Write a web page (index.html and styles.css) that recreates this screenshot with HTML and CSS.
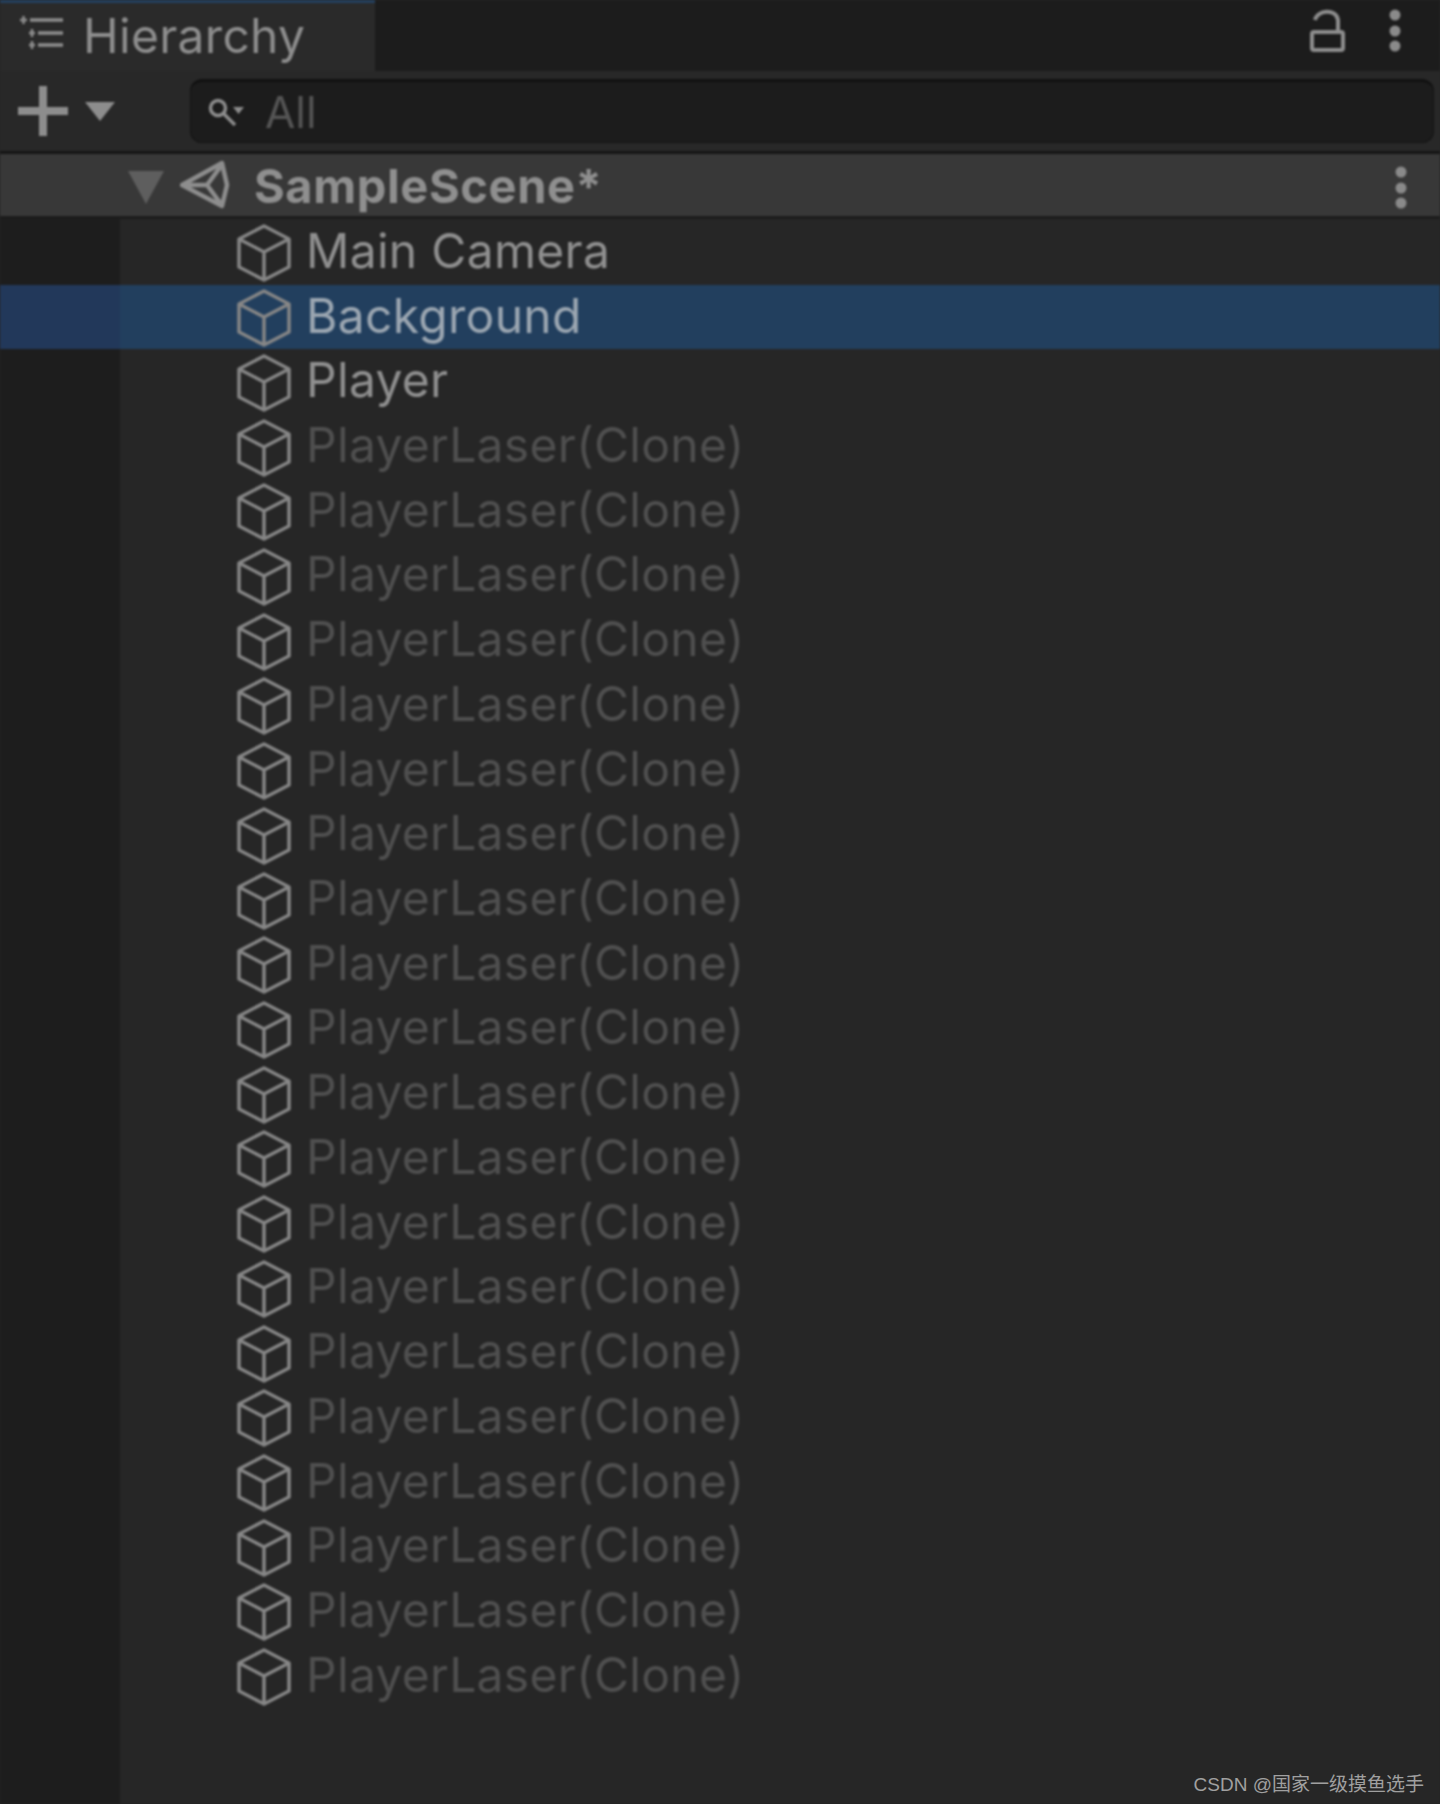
FILE: index.html
```html
<!DOCTYPE html>
<html lang="en">
<head>
    <meta charset="UTF-8">
    <title>Hierarchy</title>
    <link rel="stylesheet" href="styles.css">
</head>
<body>
    <svg class="defs" width="0" height="0">
        <symbol id="cube" viewBox="0 0 54 58">
            <path d="M27 2 L52 15 V43 L27 56 L2 43 V15 Z M2 15 L27 28 L52 15 M27 28 V56" fill="none" stroke="currentColor" stroke-width="3.500" stroke-linejoin="round"/>
        </symbol>
        <symbol id="dots" viewBox="0 0 12 44">
            <circle cx="6" cy="6" r="5.500" fill="currentColor"/>
            <circle cx="6" cy="22" r="5.500" fill="currentColor"/>
            <circle cx="6" cy="37" r="5.500" fill="currentColor"/>
        </symbol>
    </svg>

    <div class="panel">
        <!-- Tab strip -->
        <div class="tabbar">
            <div class="tab">
                <svg class="tab-icon" viewBox="0 0 46 36">
                    <path d="M10 6 H43 M18 19 H43 M18 31 H43" stroke="currentColor" stroke-width="3.500" fill="none"/>
                    <path d="M0 6 H7 M3.500 2 V10 M9 19 H15 M12 15 V23 M9 31 H15 M12 27 V35" stroke="currentColor" stroke-width="2.500" fill="none"/>
                </svg>
                <span>Hierarchy</span>
            </div>
            <div class="tab-actions">
                <svg class="lock" viewBox="0 0 36 44">
                    <path d="M6 11 C8 1 27 -1 29 11 V23" fill="none" stroke="currentColor" stroke-width="4"/>
                    <rect x="3" y="23" width="31" height="18" rx="2" fill="none" stroke="currentColor" stroke-width="4"/>
                </svg>
                <svg class="dots"><use href="#dots"/></svg>
            </div>
        </div>

        <!-- Toolbar -->
        <div class="toolbar">
            <div class="add">
                <svg class="plus" viewBox="0 0 50 50">
                    <path d="M25 0 V50 M0 25 H50" stroke="currentColor" stroke-width="8"/>
                </svg>
                <span class="caret"></span>
            </div>
            <div class="search">
                <svg class="search-icon" viewBox="0 0 38 32">
                    <circle cx="11" cy="12" r="7.500" fill="none" stroke="currentColor" stroke-width="3.500"/>
                    <path d="M17 18 L28 29" stroke="currentColor" stroke-width="3.500"/>
                    <path d="M26 11 H37 L31.500 18 Z" fill="currentColor"/>
                </svg>
                <span>All</span>
            </div>
        </div>

        <!-- Scene header -->
        <div class="scene">
            <span class="scene-arrow"></span>
            <svg class="unity" viewBox="0 0 50 50">
                <path d="M2 25 L42 3 L47 25 L42 46 Z M2 25 H27 L41 6 M27 25 L41 44" fill="none" stroke="currentColor" stroke-width="4.500" stroke-linejoin="round"/>
            </svg>
            <span class="scene-name">SampleScene*</span>
            <svg class="dots scene-dots"><use href="#dots"/></svg>
        </div>

        <!-- Object list -->
        <div class="rows">
            <div class="row"><svg class="cube"><use href="#cube"/></svg><span>Main Camera</span></div>
            <div class="row selected"><svg class="cube"><use href="#cube"/></svg><span>Background</span></div>
            <div class="row"><svg class="cube"><use href="#cube"/></svg><span>Player</span></div>
            <div class="row off"><svg class="cube"><use href="#cube"/></svg><span>PlayerLaser(Clone)</span></div>
            <div class="row off"><svg class="cube"><use href="#cube"/></svg><span>PlayerLaser(Clone)</span></div>
            <div class="row off"><svg class="cube"><use href="#cube"/></svg><span>PlayerLaser(Clone)</span></div>
            <div class="row off"><svg class="cube"><use href="#cube"/></svg><span>PlayerLaser(Clone)</span></div>
            <div class="row off"><svg class="cube"><use href="#cube"/></svg><span>PlayerLaser(Clone)</span></div>
            <div class="row off"><svg class="cube"><use href="#cube"/></svg><span>PlayerLaser(Clone)</span></div>
            <div class="row off"><svg class="cube"><use href="#cube"/></svg><span>PlayerLaser(Clone)</span></div>
            <div class="row off"><svg class="cube"><use href="#cube"/></svg><span>PlayerLaser(Clone)</span></div>
            <div class="row off"><svg class="cube"><use href="#cube"/></svg><span>PlayerLaser(Clone)</span></div>
            <div class="row off"><svg class="cube"><use href="#cube"/></svg><span>PlayerLaser(Clone)</span></div>
            <div class="row off"><svg class="cube"><use href="#cube"/></svg><span>PlayerLaser(Clone)</span></div>
            <div class="row off"><svg class="cube"><use href="#cube"/></svg><span>PlayerLaser(Clone)</span></div>
            <div class="row off"><svg class="cube"><use href="#cube"/></svg><span>PlayerLaser(Clone)</span></div>
            <div class="row off"><svg class="cube"><use href="#cube"/></svg><span>PlayerLaser(Clone)</span></div>
            <div class="row off"><svg class="cube"><use href="#cube"/></svg><span>PlayerLaser(Clone)</span></div>
            <div class="row off"><svg class="cube"><use href="#cube"/></svg><span>PlayerLaser(Clone)</span></div>
            <div class="row off"><svg class="cube"><use href="#cube"/></svg><span>PlayerLaser(Clone)</span></div>
            <div class="row off"><svg class="cube"><use href="#cube"/></svg><span>PlayerLaser(Clone)</span></div>
            <div class="row off"><svg class="cube"><use href="#cube"/></svg><span>PlayerLaser(Clone)</span></div>
            <div class="row off"><svg class="cube"><use href="#cube"/></svg><span>PlayerLaser(Clone)</span></div>
        </div>
    </div>

    <div class="watermark">CSDN @国家一级摸鱼选手</div>
</body>
</html>
```

FILE: styles.css
```css
* {
    margin: 0;
    padding: 0;
    box-sizing: border-box;
}

html, body {
    height: 100%;
}

body {
    position: relative;
    overflow: hidden;
    background: #262626;
    color: #8d8d8d;
    font-family: Inter, "Liberation Sans", sans-serif;
}

.defs {
    position: absolute;
}

.panel {
    height: 1804px;
    display: flex;
    flex-direction: column;
    filter: blur(1px);
}

.tabbar {
    height: 71px;
    display: flex;
    justify-content: space-between;
    background: #1c1c1c;
}

.tab {
    width: 375px;
    display: flex;
    align-items: center;
    gap: 17px;
    padding: 0 0 4px 20px;
    background: #2a2a2a;
    border-top: 3px solid #24405f;
    font-size: 48px;
    letter-spacing: 0.3px;
}

.tab-icon {
    width: 46px;
    height: 36px;
    margin-bottom: 6px;
}

.tab-actions {
    display: flex;
    gap: 44px;
    padding: 9px 39px 0 0;
}

.lock {
    width: 36px;
    height: 44px;
}

.dots {
    width: 12px;
    height: 44px;
    color: #8a8a8a;
}

.toolbar {
    height: 83px;
    display: flex;
    align-items: center;
    padding: 0 6px 0 18px;
    background: #282828;
    border-bottom: 3px solid #151515;
}

.add {
    width: 172px;
    display: flex;
    align-items: center;
    gap: 17px;
}

.plus {
    width: 50px;
    height: 50px;
}

.caret {
    border-left: 15px solid transparent;
    border-right: 15px solid transparent;
    border-top: 19px solid #8d8d8d;
}

.search {
    flex: 1;
    height: 64px;
    display: flex;
    align-items: center;
    gap: 20px;
    padding-left: 16px;
    background: #1c1c1c;
    border: 1px solid #131313;
    border-top: 3px solid #111;
    border-radius: 12px;
    color: #555;
    font-size: 44px;
}

.search-icon {
    width: 38px;
    height: 32px;
    color: #8d8d8d;
}

.scene {
    height: 65px;
    display: flex;
    align-items: center;
    padding: 0 33px 0 128px;
    background: #383838;
    border-bottom: 3px solid #1c1c1c;
}

.scene-arrow {
    margin-top: 5px;
    border-left: 18px solid transparent;
    border-right: 18px solid transparent;
    border-top: 33px solid #5e5e5e;
}

.unity {
    width: 50px;
    height: 50px;
    margin-left: 16px;
}

.scene-name {
    flex: 1;
    margin-left: 24px;
    font-size: 47px;
    font-weight: 700;
    letter-spacing: 0.6px;
    color: #8f8f8f;
}

.scene-dots {
    margin-top: 5px;
}

.rows {
    flex: 1;
    background: linear-gradient(to right, #1d1d1d 120px, #262626 120px);
    padding-top: 1px;
}

.row {
    height: 64.72px;
    display: flex;
    align-items: center;
    gap: 15px;
    padding-left: 237px;
    font-size: 48px;
    letter-spacing: 0.3px;
    color: #8f8f8f;
}

.row span {
    margin-bottom: 4px;
}

.row.selected {
    background: linear-gradient(to right, #22385a 120px, #223f5e 120px);
    color: #9ba6b1;
}

.row.off {
    color: #4f4f4f;
}

.cube {
    width: 54px;
    height: 58px;
    margin-top: 2px;
    color: #868686;
}

.watermark {
    position: absolute;
    right: 16px;
    bottom: 8px;
    font-family: "Liberation Sans", "Noto Sans CJK SC", sans-serif;
    font-size: 19px;
    color: #a0a0a0;
}
```
